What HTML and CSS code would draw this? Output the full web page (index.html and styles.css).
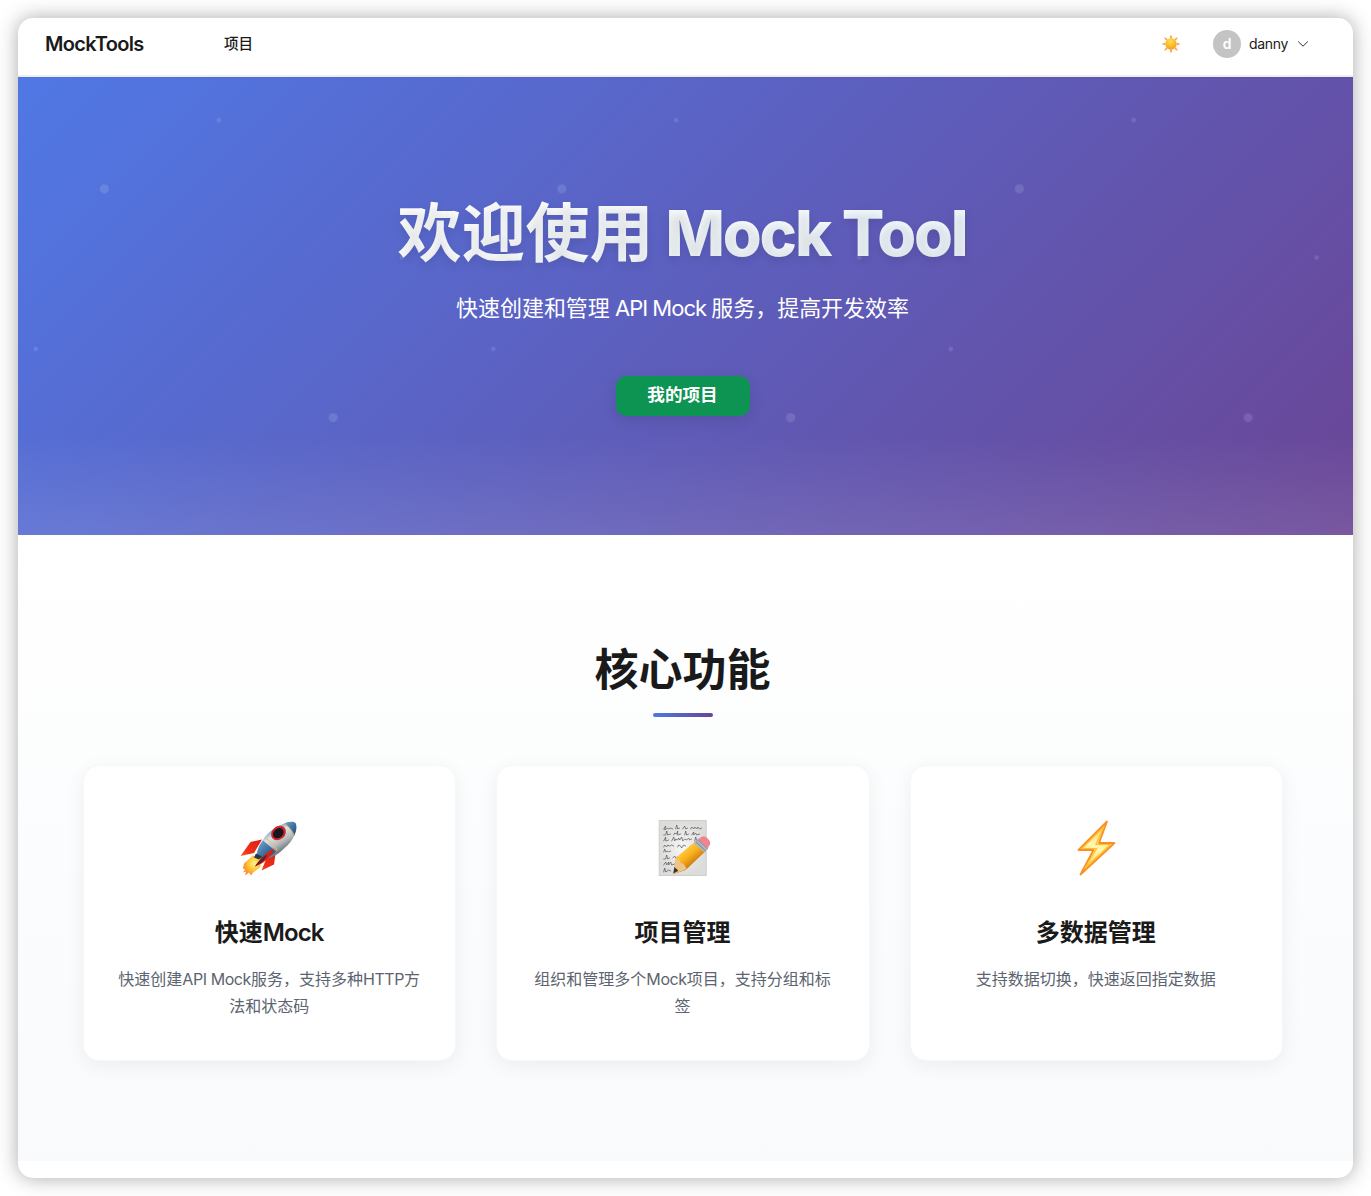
FILE: index.html
```html
<!DOCTYPE html>
<html lang="zh-CN">
<head>
<meta charset="UTF-8">
<title>MockTools</title>
<link rel="stylesheet" href="styles.css">
</head>
<body>
<div class="window">
  <header class="header">
    <div class="logo">MockTools</div>
    <nav class="nav"><a>项目</a></nav>
    <div class="actions">
      <svg class="sun" viewBox="0 0 20 20">
        <defs><radialGradient id="sunFill" cx=".45" cy=".3" r=".7"><stop offset="0" stop-color="#ffe24a"/><stop offset=".55" stop-color="#fdba2a"/><stop offset="1" stop-color="#f39a2a"/></radialGradient></defs>
        <path fill="#f5a04c" d="M10 .2l1.3 4H8.7zM10 19.8l1.3-4H8.7zM.2 10l4-1.3v2.6zM19.8 10l-4-1.3v2.6zM3 3l3.8 2L5 6.800zM17 3l-2 3.800L13.200 5zM3 17l2-3.800L6.800 15zM17 17l-3.800-2L15 13.200z"/>
        <circle cx="10" cy="10" r="5.700" fill="url(#sunFill)"/>
      </svg>
      <div class="avatar">d</div>
      <span class="user">danny</span>
      <svg class="chevron" viewBox="0 0 12 8"><path d="M1.200 1.500L6 6.200l4.800-4.700" fill="none" stroke="#333" stroke-width="1"/></svg>
    </div>
  </header>

  <section class="hero">
    <svg class="dots" width="100%" height="100%">
      <defs>
        <pattern id="grain" x="-28" y="-2.500" width="457.500" height="457.500" patternUnits="userSpaceOnUse">
          <g fill="#fff" fill-opacity=".12" transform="scale(4.575)">
            <circle cx="25" cy="25" r="1"/><circle cx="75" cy="75" r="1"/>
            <circle cx="50" cy="10" r=".5"/><circle cx="10" cy="60" r=".5"/><circle cx="90" cy="40" r=".5"/>
          </g>
        </pattern>
      </defs>
      <rect width="100%" height="100%" fill="url(#grain)"/>
    </svg>
    <div class="hero-content">
      <h1 class="hero-title"><span class="title-cn">欢迎使用</span> <span class="title-en">Mock Tool</span></h1>
      <p class="hero-subtitle">快速创建和管理<span class="latin"> API Mock </span>服务，提高开发效率</p>
      <button class="hero-button">我的项目</button>
    </div>
  </section>

  <section class="features">
    <h2 class="features-title">核心功能</h2>
    <div class="underline"></div>
    <div class="cards">
      <article class="card">
        <svg class="icon" viewBox="0 0 64 64">
          <defs>
            <linearGradient id="rocketBody" x1=".3" y1=".2" x2=".7" y2=".8"><stop offset="0" stop-color="#6b9cc8"/><stop offset=".3" stop-color="#dfe3e4"/><stop offset=".65" stop-color="#b4b8ba"/><stop offset="1" stop-color="#5d6468"/></linearGradient>
            <linearGradient id="rocketFin" x1="1" y1="0" x2="0" y2="1"><stop offset="0" stop-color="#d60f10"/><stop offset=".6" stop-color="#ef3418"/><stop offset="1" stop-color="#ffab38"/></linearGradient>
            <linearGradient id="rocketBlue" x1="0" y1="0" x2="1" y2="1"><stop offset="0" stop-color="#78a9d4"/><stop offset=".55" stop-color="#3c6f9f"/><stop offset="1" stop-color="#1e4b78"/></linearGradient>
            <radialGradient id="rocketFlame" cx=".6" cy=".4" r=".6"><stop offset="0" stop-color="#fff39a"/><stop offset=".55" stop-color="#ffc52e"/><stop offset="1" stop-color="#ff8932"/></radialGradient>
          </defs>
          <g transform="translate(-1 1.500)">
            <path d="M26 22L14.500 24.500 4.500 38.500 18 35.500zM40 33l-10 9-4.500 11L38 47z" fill="url(#rocketFin)"/>
            <path d="M17 38l-9 8-1 5 2 1-2 3 3-1-1 4 4-3 2 3 2-3 7-5 2-8z" fill="url(#rocketFlame)"/>
            <path d="M59.500 5.500c2 8-2 18-11 25C41 38 33 43 24 41l-3-3c1-10 7-20 17-27 8-5 15-7 21.500-5.500z" fill="url(#rocketBody)"/>
            <path d="M21 38c0-6 2-10 6-15l13 11c-5 5-11 8-16 7z" fill="url(#rocketBlue)"/>
            <path d="M51 4.700c4-.800 7-.700 8.500.800 2 4 .6 9-1.500 13-2-5-5-10-10-12z" fill="url(#rocketBlue)"/>
            <path d="M29 21c4 1 11 8 12 12M48 6c4 2 9 8 10 12" fill="none" stroke="#e6be62" stroke-width="1"/>
            <ellipse cx="42.500" cy="15.500" rx="8" ry="6.500" transform="rotate(-40 42.500 15.500)" fill="#d42229"/>
            <ellipse cx="42.300" cy="15.700" rx="5.800" ry="4.600" transform="rotate(-40 42.300 15.700)" fill="#14181d"/>
            <path d="M38 31c-8 4-14 10-19 18 8-3 14-8 17-13z" fill="#da2018"/><path d="M31 37c-5 3-9 7-12 12 5-3 10-5 12-12z" fill="#542426"/>
            <path d="M20 36l6 3-3 3-5-2z" fill="#253a48"/>
          </g>
        </svg>
        <h3 class="card-title">快速<span class="latin">Mock</span></h3>
        <p class="card-text">快速创建<span class="latin">API Mock</span>服务，支持多种<span class="latin">HTTP</span>方<br>法和状态码</p>
      </article>
      <article class="card">
        <svg class="icon" viewBox="0 0 64 64">
          <defs>
            <radialGradient id="paper"><stop offset="0" stop-color="#f7f7f7"/><stop offset="1" stop-color="#dcdcdb"/></radialGradient>
            <linearGradient id="pencil" x1=".25" y1=".2" x2=".65" y2=".7"><stop offset="0" stop-color="#ffd451"/><stop offset=".5" stop-color="#fbb21d"/><stop offset="1" stop-color="#c97812"/></linearGradient>
          </defs>
          <g transform="translate(.7 0)">
            <rect x="8.500" y="4.500" width="47" height="55" fill="url(#paper)" stroke="#cdcdcd"/>
            <g fill="none" stroke="#555" stroke-width=".7" stroke-linecap="round" stroke-linejoin="round">
              <path d="M13 13l2-3-1 4 3-2 1 1 2-1 2 1M25 13l1-4 1 4 2-1M32 13l2-3 1 3 2-1M40 13l1-2 2 2 1-2 2 2 1-2 2 2 2-1"/>
              <path d="M13 19h2l1-4 1 4 3-1M23 19l1-2 2 1 1-3 0 4 3-1M34 19l1-4 1 4 2-1M41 19l2-3 0 3 2-2 1 2 3-1"/>
              <path d="M13 25l2-4 0 4 3-1M21 25l2-4 1 4 1-2 2 1 1-2 1 2 2-3 1 4 2-2 2 1 2-2 1 2 2-1M44 25l1-4 1 4"/>
              <path d="M13 31l1-2 2 2 1-2 2 1 2-1 2 1M27 31l1-2 2 1 1 2 2-3 2 1M39 31l2-2 1 2M13 36l1-3 1 3 2-1 1 1 2-1M13 43h2l1-4 1 4 2-1M22 42l2-2 1 2 2-1M13 49l2-3 1 3 2-3 0 3 2-3 1 3 3-1M13 56l1-4 1 4 3-2 2 1M24 55l2-2"/>
            </g>
            <path d="M27 47L50 23l8 8-21 21-13 6z" fill="#777" opacity=".3"/>
            <path d="M25 42L45 25l10 10-20 19-12 4z" fill="url(#pencil)"/>
            <path d="M25 42l4 2 1 3 3 1 3 5-13 5z" fill="#edc58a"/>
            <path d="M23.700 51l4 3.800-5.200 2.700z" fill="#343434"/>
            <path d="M43 27l5-4.500 10 9-4 5z" fill="#abb9c1"/><path d="M45 25.500l10 9.500M47 23.500l10 9.500" stroke="#728391" stroke-width="1"/>
            <path d="M48 23q4.500-5 9-.500t1 8l-2 1.500-8-8z" fill="#ee858e"/>
          </g>
        </svg>
        <h3 class="card-title">项目管理</h3>
        <p class="card-text">组织和管理多个<span class="latin">Mock</span>项目，支持分组和标<br>签</p>
      </article>
      <article class="card">
        <svg class="icon" viewBox="0 0 64 64">
          <defs><linearGradient id="bolt" x1=".7" y1="0" x2=".3" y2="1"><stop offset="0" stop-color="#ffcb45"/><stop offset=".5" stop-color="#fff7b0"/><stop offset="1" stop-color="#ffcf35"/></linearGradient></defs>
          <path d="M43 5.500L14.500 34H29.500L16.500 58.500 50.500 27H35z" fill="url(#bolt)" stroke="#fa8f22" stroke-width="1.800" stroke-linejoin="round"/>
          <path d="M40 10.500L18 32.500H32.500L21 52 46.500 28.500H32z" fill="none" stroke="#ffbd36" stroke-width="1.200"/>
        </svg>
        <h3 class="card-title">多数据管理</h3>
        <p class="card-text">支持数据切换，快速返回指定数据</p>
      </article>
    </div>
  </section>
</div>
</body>
</html>
```
FILE: styles.css
```css
* { box-sizing: border-box; }
body {
  margin: 0;
  height: 1196px;
  padding: 18px;
  overflow: hidden;
  background: #fff;
  font-family: Inter, "Noto Sans CJK SC", sans-serif;
  color: #1a1a1a;
}
h1, h2, h3, p { margin: 0; }
.window {
  width: 1335px;
  height: 1160px;
  border-radius: 15px;
  overflow: hidden;
  background: #fff;
  box-shadow: 0 0 20px rgba(0, 0, 0, .34);
}
.header {
  height: 59px;
  padding: 0 44px 6px 27px;
  display: flex;
  align-items: center;
  border-bottom: 2px solid #eee;
}
.logo { width: 179px; font-size: 20px; font-weight: 600; letter-spacing: -.7px; }
.nav { padding-bottom: 2px; font-size: 14.600px; font-weight: 500; }
.actions { margin-left: auto; display: flex; align-items: center; }
.sun { width: 20px; height: 20px; margin-right: 32px; }
.avatar {
  width: 28px;
  height: 28px;
  margin-right: 8px;
  border-radius: 50%;
  background: #c4c4c4;
  color: #fff;
  font-size: 14px;
  font-weight: 600;
  line-height: 28px;
  text-align: center;
}
.user { width: 48px; font-size: 14px; letter-spacing: -.3px; }
.chevron { width: 12px; height: 8px; }

.hero {
  height: 458px;
  display: grid;
  background:
    linear-gradient(to top, rgba(255, 255, 255, .1), transparent 100px),
    linear-gradient(135deg, #5078e5 0%, #6a4595 100%);
  box-shadow: inset 0 2px 2px -2px rgba(0, 0, 0, .12);
}
.dots, .hero-content { grid-area: 1 / 1; }
.hero-content {
  z-index: 1;
  padding: 117px 5px 0 0;
  display: flex;
  flex-direction: column;
  align-items: center;
}
.hero-title {
  height: 78px;
  padding-right: 2px;
  line-height: 78px;
  font-size: 64px;
  font-weight: 800;
  letter-spacing: -2px;
  white-space: nowrap;
  color: transparent;
  background: linear-gradient(135deg, #fff, #f0f9ff);
  -webkit-background-clip: text;
  background-clip: text;
  text-shadow: 0 4px 8px rgba(0, 0, 0, .1);
}
.title-cn { font-weight: 700; letter-spacing: 0; }
.title-en { font-size: 63px; letter-spacing: -2.200px; }
.hero-subtitle {
  margin-top: 18px;
  height: 36px;
  padding-right: 1px;
  line-height: 36px;
  font-size: 22px;
  letter-spacing: -.05px;
  color: #fff;
  white-space: nowrap;
}
.hero-subtitle .latin { letter-spacing: -.98px; }
.hero-button {
  margin-top: 50px;
  width: 134px;
  height: 40px;
  padding: 0 1px 2px 0;
  border: 0;
  border-radius: 10px;
  background: #0d9453;
  color: #fff;
  font: 700 17.6px/38px Inter, "Noto Sans CJK SC", sans-serif;
  box-shadow: 0 4px 15px rgba(0, 0, 0, .11);
}

.features {
  height: 626px;
  padding: 101px 5px 0 0;
  display: flex;
  flex-direction: column;
  align-items: center;
  background: linear-gradient(180deg, #fff, #f8fafc);
}
.features-title {
  height: 68px;
  padding-right: 1px;
  line-height: 68px;
  font-size: 44px;
  font-weight: 700;
}
.underline {
  margin-top: 9px;
  width: 60px;
  height: 4px;
  border-radius: 2px;
  background: linear-gradient(135deg, #5078e5, #6a4393);
}
.cards {
  margin-top: 48px;
  width: 1200px;
  display: grid;
  grid-template-columns: repeat(3, 1fr);
  gap: 40px;
}
.card {
  height: 296px;
  padding: 50px 1px 0 0;
  display: flex;
  flex-direction: column;
  align-items: center;
  background: #fff;
  border: 1px solid #f5f7f9;
  border-radius: 16px;
  box-shadow: 0 4px 20px rgba(0, 0, 0, .06);
}
.icon { width: 64px; height: 64px; }
.card-title { margin-top: 35px; height: 36px; line-height: 36px; font-size: 24px; font-weight: 600; }
.card-title .latin { letter-spacing: -.9px; }
.card-text {
  margin-top: 15px;
  line-height: 27.2px;
  font-size: 16px;
  color: #5c6470;
  text-align: center;
  white-space: nowrap;
}
.card-text .latin { letter-spacing: -.42px; }
```
